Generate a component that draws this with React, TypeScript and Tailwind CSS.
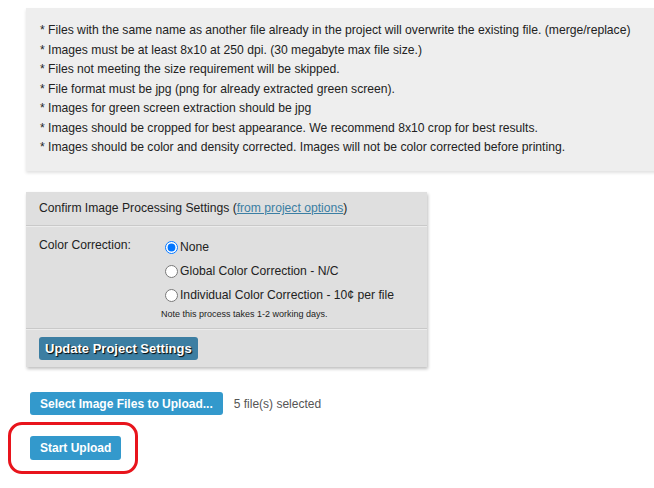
const notes = [
  "Files with the same name as another file already in the project will overwrite the existing file. (merge/replace)",
  "Images must be at least 8x10 at 250 dpi. (30 megabyte max file size.)",
  "Files not meeting the size requirement will be skipped.",
  "File format must be jpg (png for already extracted green screen).",
  "Images for green screen extraction should be jpg",
  "Images should be cropped for best appearance. We recommend 8x10 crop for best results.",
  "Images should be color and density corrected. Images will not be color corrected before printing.",
];

const options = [
  { id: "none", label: "None", checked: true },
  { id: "global", label: "Global Color Correction - N/C", checked: false },
  { id: "individual", label: "Individual Color Correction - 10¢ per file", checked: false },
];

const App = () => {
  return (
    <div className="w-[654px] h-[488px] overflow-hidden bg-white text-[#222] font-['Liberation_Sans',Arial,sans-serif]">
      <div className="ml-[26px] mt-[8px] w-[660px] h-[163px] bg-[#eeeeee] shadow-[0_2px_3px_rgba(0,0,0,0.12)] pl-[14px] pt-[13px] text-[12.15px] leading-[19.5px] whitespace-nowrap">
        {notes.map((n) => (
          <p key={n}>* {n}</p>
        ))}
      </div>

      <div className="ml-[26px] mt-[21px] w-[401px] bg-[#dfdfdf] shadow-[1px_2px_3px_rgba(0,0,0,0.25)] text-[12.15px]">
        <div className="h-[34px] flex items-center px-[13px] border-b border-[#c9c9c9]">
          Confirm Image Processing Settings (
          <a href="#" className="text-[#3b7ea3] underline">from project options</a>)
        </div>
        <div className="flex px-[13px] pt-[8px] pb-[6px] border-t border-[#ececec] border-b border-b-[#c9c9c9]">
          <div className="w-[122px] pt-[1px]">Color Correction:</div>
          <div className="flex flex-col">
            {options.map((o) => (
              <label key={o.id} className="flex items-center h-[24px] ml-[4px]">
                <input
                  type="radio"
                  name="cc"
                  defaultChecked={o.checked}
                  className="w-[13px] h-[13px] m-0 mr-[2px] accent-[#0075ff]"
                />
                <span>{o.label}</span>
              </label>
            ))}
            <div className="text-[9px] mt-[1px] h-[14px]">Note this process takes 1-2 working days.</div>
          </div>
        </div>
        <div className="border-t border-[#ececec] px-[13px] pt-[7px] pb-[7px]">
          <button className="h-[23px] px-[6px] rounded-[3px] bg-[#3c7ea2] text-white font-bold text-[13px] [text-shadow:1px_1px_1px_#000]">
            Update Project Settings
          </button>
        </div>
      </div>

      <div className="ml-[30px] mt-[25px] flex items-center gap-[11px]">
        <button className="h-[23px] px-[10px] rounded-[3px] bg-[#3399cc] text-white font-bold text-[12px]">
          Select Image Files to Upload...
        </button>
        <span className="text-[12px] text-[#555]">5 file(s) selected</span>
      </div>

      <div className="ml-[8px] mt-[7px] w-[130px] h-[52px] border-[3px] border-[#e8141c] rounded-[14px] flex items-center pl-[19px]">
        <button className="h-[24px] px-[10px] rounded-[3px] bg-[#3399cc] text-white font-bold text-[12px]">
          Start Upload
        </button>
      </div>
    </div>
  );
};

export default App;
